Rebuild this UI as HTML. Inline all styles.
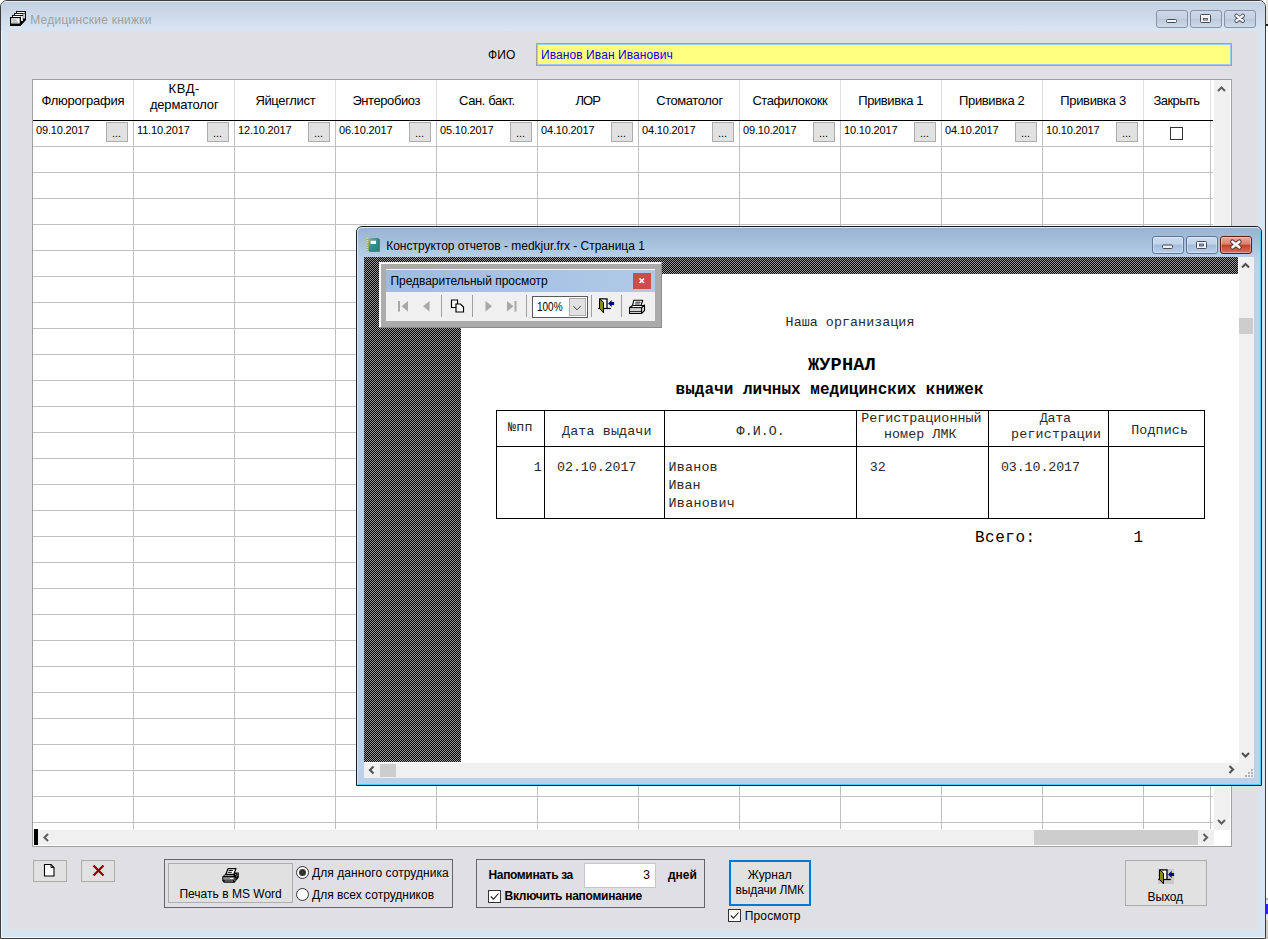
<!DOCTYPE html><html lang="ru"><head><meta charset="utf-8"><title>Медицинские книжки</title><style>
*{box-sizing:border-box;margin:0;padding:0}
html,body{width:1268px;height:939px;overflow:hidden;background:#fff}
body{position:relative;font-family:"Liberation Sans",sans-serif;font-size:12px;color:#000}
.a{position:absolute}
.t{position:absolute;white-space:nowrap;line-height:1}
#bg{left:0;top:0;width:1268px;height:939px;background:#fff}
#main{left:0;top:0;width:1266px;height:939px;border:1px solid #3c3c3c;border-radius:7px 7px 0 0;background:#d7e4f2;overflow:hidden;box-shadow:inset 1px 0 0 #f1f6fb,inset 0 -1px 0 #f1f6fb}
#mtitle{left:0;top:0;width:1264px;height:30px;background:linear-gradient(#e6edf5 0,#e6edf5 1px,#c1cfdf 1px,#ccdae9 45%,#d9e5f3)}
#client{left:8px;top:31px;width:1250px;height:899px;background:#e0dfe3}
.cb{position:absolute;top:10px;height:18px;width:32px;border:1px solid #8693a8;border-radius:3px;background:linear-gradient(#cdd9e8,#c3d0e1 50%,#b9c8db 50%,#cfdbea)}
.hd{position:absolute;text-align:center;font-size:13px;line-height:15px;white-space:nowrap}
.vl{position:absolute;width:1px;background:#c0c0c0}
.hl{position:absolute;height:1px;background:#c0c0c0}
.dt{position:absolute;font-size:11px;line-height:1;white-space:nowrap}
.eb{position:absolute;width:22px;height:20px;background:#e1e1e1;border:1px solid #adadad;font-size:11px;text-align:center;line-height:20px}
.btn{position:absolute;background:#e1e1e1;border:1px solid #adadad}
.grp{position:absolute;border:1px solid #646464}
.m{font-family:"Liberation Mono",monospace;font-size:13.33px;color:#222}
.mm{font-family:"Liberation Mono",monospace}
.chk{background:conic-gradient(#969696 25%,#000 0 50%,#969696 0 75%,#000 0) 0 0/2px 2px}
.sep{position:absolute;width:1px;top:295px;height:22px;background:#a0a0a0}
</style></head><body>
<div id="bg" class="a"></div>
<div class="a" style="left:1266px;top:0;width:2px;height:24px;background:#e8e4dc"></div>
<div class="a" style="left:1266px;top:24px;width:2px;height:2px;background:#222"></div>
<div class="a" style="left:1266px;top:898px;width:2px;height:2px;background:#b0b0b0"></div>
<div class="a" style="left:1266px;top:900px;width:2px;height:4px;background:#e8e8e8"></div>
<div class="a" style="left:1266px;top:904px;width:2px;height:10px;background:#2424ff"></div>
<div class="a" style="left:1266px;top:914px;width:2px;height:6px;background:#e2e2ea"></div>
<div class="a" style="left:1266px;top:920px;width:2px;height:19px;background:#d2cbc3"></div>
<div id="main" class="a">
<div id="mtitle" class="a"></div>
</div>
<svg class="a" style="left:10px;top:11px" width="16" height="15" viewBox="0 0 16 15"><path d="M0 15v-9h2v-2h2v-2h2v-2h10v9l-5.500 6z" fill="#000"/><g fill="#fff"><rect x="1.200" y="7.200" width="8.500" height="5.300"/><rect x="3" y="4.900" width="7.700" height="1.100"/><rect x="5" y="2.900" width="7.700" height="1.100"/><rect x="7" y="0.900" width="7.700" height="1.100"/><rect x="11" y="5" width="1.800" height="5"/><rect x="13.300" y="2.500" width="1.500" height="5"/></g><g fill="#8a8a8a"><rect x="2.200" y="8.600" width="4.500" height="1"/><rect x="2.200" y="10.600" width="6" height="1"/></g></svg>
<div class="t" style="left:30.20px;top:14px;font-size:12px;letter-spacing:0.255px;color:#a0a0a0;">Медицинские книжки</div>
<div class="cb" style="left:1156px"></div>
<div class="cb" style="left:1190px"></div>
<div class="cb" style="left:1224px"></div>
<svg class="a" style="left:1156px;top:10px" width="100" height="18" viewBox="0 0 100 18"><rect x="10.5" y="9.5" width="10" height="3" fill="#f4f4f4" stroke="#434b5c" rx="1"/><rect x="44.500" y="4.500" width="10" height="8" fill="#f4f4f4" stroke="#434b5c" rx="1"/><rect x="47.5" y="8.5" width="4" height="1.6" fill="#c9d5e4" stroke="#434b5c" stroke-width="0.8"/><g stroke-linecap="round" fill="none"><path d="M80.500 5.800l6.300 5M86.800 5.800l-6.300 5" stroke="#434b5c" stroke-width="4.200"/><path d="M80.500 5.800l6.300 5M86.800 5.800l-6.300 5" stroke="#f6f6f6" stroke-width="2.400"/></g></svg>
<div id="client" class="a"></div>
<div class="t" style="left:488.00px;top:49px;font-size:12px;letter-spacing:0.126px;">ФИО</div>
<div class="a" style="left:536px;top:43px;width:696px;height:23px;border:1px solid #a2a2a6;background:#ffff80;box-shadow:inset 0 0 0 1px #a9c7ee"></div>
<div class="t" style="left:541.00px;top:49px;font-size:12px;letter-spacing:0.081px;color:#0000ff;">Иванов Иван Иванович</div>
<div class="a" style="left:32px;top:79px;width:1200px;height:768px;border:1px solid #a0a0a0;background:#fff"></div>
<div class="t" style="left:41.50px;top:94px;font-size:13px;letter-spacing:-0.231px;">Флюрография</div>
<div class="t" style="left:168.60px;top:82px;font-size:13px;letter-spacing:0.546px;">КВД-</div>
<div class="t" style="left:149.90px;top:98px;font-size:13px;letter-spacing:-0.182px;">дерматолог</div>
<div class="t" style="left:255.40px;top:94px;font-size:13px;letter-spacing:-0.335px;">Яйцеглист</div>
<div class="t" style="left:352.40px;top:94px;font-size:13px;letter-spacing:-0.412px;">Энтеробиоз</div>
<div class="t" style="left:459.10px;top:94px;font-size:13px;letter-spacing:-0.388px;">Сан. бакт.</div>
<div class="t" style="left:575.50px;top:94px;font-size:13px;letter-spacing:-0.922px;">ЛОР</div>
<div class="t" style="left:656.20px;top:94px;font-size:13px;letter-spacing:-0.425px;">Стоматолог</div>
<div class="t" style="left:752.40px;top:94px;font-size:13px;letter-spacing:-0.440px;">Стафилококк</div>
<div class="t" style="left:858.30px;top:94px;font-size:13px;letter-spacing:-0.425px;">Прививка 1</div>
<div class="t" style="left:959.00px;top:94px;font-size:13px;letter-spacing:-0.347px;">Прививка 2</div>
<div class="t" style="left:1060.30px;top:94px;font-size:13px;letter-spacing:-0.347px;">Прививка 3</div>
<div class="t" style="left:1153.60px;top:94px;font-size:13px;letter-spacing:-0.616px;">Закрыть</div>
<div class="vl" style="left:133px;top:80px;height:40px;background:#dedede"></div>
<div class="vl" style="left:133px;top:121px;height:708px"></div>
<div class="vl" style="left:234px;top:80px;height:40px;background:#dedede"></div>
<div class="vl" style="left:234px;top:121px;height:708px"></div>
<div class="vl" style="left:335px;top:80px;height:40px;background:#dedede"></div>
<div class="vl" style="left:335px;top:121px;height:708px"></div>
<div class="vl" style="left:436px;top:80px;height:40px;background:#dedede"></div>
<div class="vl" style="left:436px;top:121px;height:708px"></div>
<div class="vl" style="left:537px;top:80px;height:40px;background:#dedede"></div>
<div class="vl" style="left:537px;top:121px;height:708px"></div>
<div class="vl" style="left:638px;top:80px;height:40px;background:#dedede"></div>
<div class="vl" style="left:638px;top:121px;height:708px"></div>
<div class="vl" style="left:739px;top:80px;height:40px;background:#dedede"></div>
<div class="vl" style="left:739px;top:121px;height:708px"></div>
<div class="vl" style="left:840px;top:80px;height:40px;background:#dedede"></div>
<div class="vl" style="left:840px;top:121px;height:708px"></div>
<div class="vl" style="left:941px;top:80px;height:40px;background:#dedede"></div>
<div class="vl" style="left:941px;top:121px;height:708px"></div>
<div class="vl" style="left:1042px;top:80px;height:40px;background:#dedede"></div>
<div class="vl" style="left:1042px;top:121px;height:708px"></div>
<div class="vl" style="left:1143px;top:80px;height:40px;background:#dedede"></div>
<div class="vl" style="left:1143px;top:121px;height:708px"></div>
<div class="vl" style="left:1210px;top:80px;height:40px;background:#dedede"></div>
<div class="vl" style="left:1210px;top:121px;height:708px"></div>
<div class="a" style="left:33px;top:120px;width:1180px;height:1px;background:#000"></div>
<div class="hl" style="left:33px;top:146px;width:1180px"></div>
<div class="hl" style="left:33px;top:172px;width:1180px"></div>
<div class="hl" style="left:33px;top:198px;width:1180px"></div>
<div class="hl" style="left:33px;top:224px;width:1180px"></div>
<div class="hl" style="left:33px;top:250px;width:1180px"></div>
<div class="hl" style="left:33px;top:276px;width:1180px"></div>
<div class="hl" style="left:33px;top:302px;width:1180px"></div>
<div class="hl" style="left:33px;top:328px;width:1180px"></div>
<div class="hl" style="left:33px;top:354px;width:1180px"></div>
<div class="hl" style="left:33px;top:380px;width:1180px"></div>
<div class="hl" style="left:33px;top:406px;width:1180px"></div>
<div class="hl" style="left:33px;top:432px;width:1180px"></div>
<div class="hl" style="left:33px;top:458px;width:1180px"></div>
<div class="hl" style="left:33px;top:484px;width:1180px"></div>
<div class="hl" style="left:33px;top:510px;width:1180px"></div>
<div class="hl" style="left:33px;top:536px;width:1180px"></div>
<div class="hl" style="left:33px;top:562px;width:1180px"></div>
<div class="hl" style="left:33px;top:588px;width:1180px"></div>
<div class="hl" style="left:33px;top:614px;width:1180px"></div>
<div class="hl" style="left:33px;top:640px;width:1180px"></div>
<div class="hl" style="left:33px;top:666px;width:1180px"></div>
<div class="hl" style="left:33px;top:692px;width:1180px"></div>
<div class="hl" style="left:33px;top:718px;width:1180px"></div>
<div class="hl" style="left:33px;top:744px;width:1180px"></div>
<div class="hl" style="left:33px;top:770px;width:1180px"></div>
<div class="hl" style="left:33px;top:796px;width:1180px"></div>
<div class="hl" style="left:33px;top:822px;width:1180px"></div>
<div class="dt" style="left:36px;top:125px;letter-spacing:-0.16px">09.10.2017</div>
<div class="eb" style="left:106px;top:122px"></div>
<div class="t" style="left:112.00px;top:128px;font-size:11px;">...</div>
<div class="dt" style="left:137px;top:125px;letter-spacing:-0.16px">11.10.2017</div>
<div class="eb" style="left:207px;top:122px"></div>
<div class="t" style="left:213.00px;top:128px;font-size:11px;">...</div>
<div class="dt" style="left:238px;top:125px;letter-spacing:-0.16px">12.10.2017</div>
<div class="eb" style="left:308px;top:122px"></div>
<div class="t" style="left:314.00px;top:128px;font-size:11px;">...</div>
<div class="dt" style="left:339px;top:125px;letter-spacing:-0.16px">06.10.2017</div>
<div class="eb" style="left:409px;top:122px"></div>
<div class="t" style="left:415.00px;top:128px;font-size:11px;">...</div>
<div class="dt" style="left:440px;top:125px;letter-spacing:-0.16px">05.10.2017</div>
<div class="eb" style="left:510px;top:122px"></div>
<div class="t" style="left:516.00px;top:128px;font-size:11px;">...</div>
<div class="dt" style="left:541px;top:125px;letter-spacing:-0.16px">04.10.2017</div>
<div class="eb" style="left:611px;top:122px"></div>
<div class="t" style="left:617.00px;top:128px;font-size:11px;">...</div>
<div class="dt" style="left:642px;top:125px;letter-spacing:-0.16px">04.10.2017</div>
<div class="eb" style="left:712px;top:122px"></div>
<div class="t" style="left:718.00px;top:128px;font-size:11px;">...</div>
<div class="dt" style="left:743px;top:125px;letter-spacing:-0.16px">09.10.2017</div>
<div class="eb" style="left:813px;top:122px"></div>
<div class="t" style="left:819.00px;top:128px;font-size:11px;">...</div>
<div class="dt" style="left:844px;top:125px;letter-spacing:-0.16px">10.10.2017</div>
<div class="eb" style="left:914px;top:122px"></div>
<div class="t" style="left:920.00px;top:128px;font-size:11px;">...</div>
<div class="dt" style="left:945px;top:125px;letter-spacing:-0.16px">04.10.2017</div>
<div class="eb" style="left:1015px;top:122px"></div>
<div class="t" style="left:1021.00px;top:128px;font-size:11px;">...</div>
<div class="dt" style="left:1046px;top:125px;letter-spacing:-0.16px">10.10.2017</div>
<div class="eb" style="left:1116px;top:122px"></div>
<div class="t" style="left:1122.00px;top:128px;font-size:11px;">...</div>
<div class="a" style="left:1170px;top:127px;width:13px;height:13px;border:1px solid #333;background:#fff"></div>
<div class="a" style="left:1214px;top:80px;width:16px;height:750px;background:#f0f0f0"></div>
<div class="a" style="left:33px;top:830px;width:1181px;height:15px;background:#f0f0f0"></div>
<div class="a" style="left:34px;top:829px;width:4px;height:16px;background:#000"></div>
<div class="a" style="left:1034px;top:830px;width:164px;height:15px;background:#cdcdcd"></div>
<svg class="a" style="left:0;top:0;pointer-events:none" width="1268" height="939" viewBox="0 0 1268 939"><path d="M1218.0 91L1221.5 87.5L1225.0 91" fill="none" stroke="#606060" stroke-width="2.100"/><path d="M1218.0 820L1221.5 823.5L1225.0 820" fill="none" stroke="#606060" stroke-width="2.100"/><path d="M48 834.0L44.5 837.5L48 841.0" fill="none" stroke="#606060" stroke-width="2.100"/><path d="M1203.5 834.0L1207.0 837.5L1203.5 841.0" fill="none" stroke="#606060" stroke-width="2.100"/></svg>
<div class="btn" style="left:33px;top:860px;width:34px;height:22px"></div>
<svg class="a" style="left:43px;top:863px" width="14" height="15" viewBox="0 0 14 15"><path d="M1.500 1.500h6.500l3 3v8.500h-9.500z" fill="#fff" stroke="#000" stroke-width="1.100"/><path d="M8 1.500v3h3" fill="none" stroke="#000" stroke-width="0.900"/></svg>
<div class="btn" style="left:81px;top:860px;width:34px;height:22px"></div>
<svg class="a" style="left:92px;top:864px" width="13" height="13" viewBox="0 0 13 13"><path d="M1.5 1.500l10 10M11.500 1.500l-10 10" stroke="#8b0000" stroke-width="2.200" fill="none"/></svg>
<div class="grp" style="left:164px;top:859px;width:289px;height:49px"></div>
<div class="btn" style="left:168px;top:863px;width:125px;height:40px"></div>
<div class="t" style="left:179.40px;top:888px;font-size:12px;letter-spacing:0.016px;">Печать в MS Word</div>
<svg class="a" style="left:222px;top:868px" width="17" height="15" viewBox="0 0 17 15"><path d="M0.300 8.500l3-2.500h8.700l1-1.500h3.800v5l-4.300 5.300h-10.500l-1.700-1.800z" fill="#000"/><path d="M6 0.600h8l-2.200 5.700h-8z" fill="#fff" stroke="#000" stroke-width="1.200" stroke-linejoin="round"/><path d="M6.500 2.400h4.300M5.700 4.300h4.100" stroke="#000" stroke-width="1"/><path d="M2.500 7.600h9M2.500 13h8.500" stroke="#e4e4e4" stroke-width="0.700"/><rect x="1.300" y="9.200" width="11.200" height="2.600" fill="#909090"/><rect x="8" y="10" width="3.200" height="1" fill="#fff"/><g fill="#c8c8c8"><rect x="13.200" y="6" width="0.900" height="0.900"/><rect x="14.600" y="7" width="0.900" height="0.900"/><rect x="13.800" y="8.300" width="0.900" height="0.900"/><rect x="14.800" y="5.500" width="0.900" height="0.900"/><rect x="13.300" y="10.500" width="0.900" height="0.900"/><rect x="12.500" y="12" width="0.900" height="0.900"/></g></svg>
<div class="a" style="left:296.0px;top:866.0px;width:13px;height:13px;border:1px solid #333;border-radius:50%;background:#fff"></div><div class="a" style="left:299.0px;top:869.0px;width:7px;height:7px;border-radius:50%;background:#333"></div>
<div class="a" style="left:296.0px;top:888.0px;width:13px;height:13px;border:1px solid #333;border-radius:50%;background:#fff"></div>
<div class="t" style="left:312.10px;top:867px;font-size:12px;letter-spacing:0.061px;">Для данного сотрудника</div>
<div class="t" style="left:312.10px;top:889px;font-size:12px;letter-spacing:0.004px;">Для всех сотрудников</div>
<div class="grp" style="left:476px;top:859px;width:229px;height:49px"></div>
<div class="t" style="left:488.50px;top:869px;font-size:12px;letter-spacing:-0.353px;font-weight:bold;">Напоминать за</div>
<div class="a" style="left:584px;top:863px;width:72px;height:25px;background:#fff;border:1px solid #c5c5cc"></div>
<div class="t" style="left:643.20px;top:869px;font-size:12px;">3</div>
<div class="t" style="left:667.90px;top:869px;font-size:12px;letter-spacing:0.054px;font-weight:bold;">дней</div>
<div class="a" style="left:488px;top:890px;width:13px;height:13px;border:1px solid #333;background:#fff"></div><svg class="a" style="left:488px;top:890px" width="13" height="13" viewBox="0 0 13 13"><path d="M2.800 6.500l2.700 2.700l5-5.700" fill="none" stroke="#222" stroke-width="1.100"/></svg>
<div class="t" style="left:504.60px;top:890px;font-size:12px;letter-spacing:-0.279px;font-weight:bold;">Включить напоминание</div>
<div class="a" style="left:729px;top:860px;width:82px;height:46px;background:#e1e1e1;border:2px solid #0078d7"></div>
<div class="t" style="left:747.70px;top:869px;font-size:12px;letter-spacing:0.043px;">Журнал</div>
<div class="t" style="left:735.60px;top:884px;font-size:12px;letter-spacing:-0.119px;">выдачи ЛМК</div>
<div class="a" style="left:728px;top:909px;width:13px;height:13px;border:1px solid #333;background:#fff"></div><svg class="a" style="left:728px;top:909px" width="13" height="13" viewBox="0 0 13 13"><path d="M2.800 6.500l2.700 2.700l5-5.700" fill="none" stroke="#222" stroke-width="1.100"/></svg>
<div class="t" style="left:744.80px;top:910px;font-size:12px;letter-spacing:0.124px;">Просмотр</div>
<div class="btn" style="left:1125px;top:860px;width:82px;height:46px"></div>
<div class="a" style="left:1158px;top:869px;width:16px;height:15px;background:#c8c8c8"></div>
<svg class="a" style="left:1158px;top:869px" width="17" height="16" viewBox="0 0 17 16"><rect x="5" y="1" width="3.500" height="9.500" fill="#fff"/><path d="M1.500 0.800h7.500v9.700" fill="none" stroke="#000" stroke-width="1.300"/><path d="M0.300 10.500h12.500" stroke="#000" stroke-width="1.200"/><path d="M1.500 0.800l4 3.500v10.500l-4-4.300z" fill="#8c8c14" stroke="#000" stroke-width="1" stroke-linejoin="round"/><path d="M10.100 5.500l3.600-3.500v2h2.400v3h-2.400v2z" fill="#00008b"/></svg>
<div class="t" style="left:1147.50px;top:891px;font-size:12px;letter-spacing:-0.101px;">Выход</div>
<div class="a" style="left:356px;top:226px;width:906px;height:560px;border:1px solid #1c1c1c;border-radius:6px 6px 0 0;background:#b9d1ea;overflow:hidden"><div class="a" style="left:0;top:0;width:904px;height:31px;background:linear-gradient(#98b3d0,#a9c3df 60%,#b9d1ea)"></div><div class="a" style="left:0;top:0;width:904px;height:558px;border:1px solid #d6e7f9;border-radius:5px 5px 0 0;border-bottom-color:#45d0f2;border-right-color:#45d0f2"></div></div>
<svg class="a" style="left:366px;top:237px" width="15" height="16" viewBox="0 0 15 16"><defs><linearGradient id="bk" x1="0" y1="0" x2="1" y2="1"><stop offset="0" stop-color="#8db6b3"/><stop offset="0.450" stop-color="#3a8f8b"/><stop offset="1" stop-color="#148c80"/></linearGradient></defs><rect x="3.300" y="2" width="10.500" height="12.800" fill="#476b6b"/><rect x="2.300" y="1" width="10.300" height="12.900" fill="url(#bk)"/><rect x="0.850" y="1" width="1.500" height="12.700" fill="#9a9a00"/><path d="M1.600 1v12.700" stroke="#f4f400" stroke-width="1.500" stroke-dasharray="1.100 0.700"/><rect x="4.100" y="3.200" width="6" height="3.800" fill="#8fa5a5"/><rect x="4.800" y="3.900" width="5.200" height="3" fill="#fff"/></svg>
<div class="t" style="left:386.20px;top:240px;font-size:12px;letter-spacing:-0.007px;">Конструктор отчетов - medkjur.frx - Страница 1</div>
<div class="a" style="left:1152px;top:236px;width:32px;height:18px;border:1px solid;border-radius:3px;background:linear-gradient(#cddcf0,#bfd2ea 45%,#a3bcdc 50%,#b9cfe8);border-color:#5d7596;box-shadow:inset 0 0 0 1px rgba(255,255,255,.35)"></div>
<div class="a" style="left:1186px;top:236px;width:32px;height:18px;border:1px solid;border-radius:3px;background:linear-gradient(#cddcf0,#bfd2ea 45%,#a3bcdc 50%,#b9cfe8);border-color:#5d7596;box-shadow:inset 0 0 0 1px rgba(255,255,255,.35)"></div>
<div class="a" style="left:1220px;top:236px;width:32px;height:18px;border:1px solid;border-radius:3px;background:linear-gradient(#e9a99b,#d8806d 45%,#c4402a 50%,#d4705a);border-color:#5a1c17;box-shadow:inset 0 0 0 1px rgba(255,255,255,.35)"></div>
<svg class="a" style="left:1153px;top:236px" width="100" height="18" viewBox="0 0 100 18"><rect x="9.500" y="9" width="10" height="3.500" fill="#f0efe9" stroke="#434b5c" rx="1"/><rect x="43.500" y="5.5" width="10" height="7" fill="#f4f4f4" stroke="#434b5c" rx="1"/><rect x="46.500" y="8" width="4" height="2" fill="#8aa6cc" stroke="#434b5c" stroke-width="0.800"/><g stroke-linecap="round" fill="none"><path d="M79.500 5.800l6.800 5.500M86.300 5.800l-6.800 5.500" stroke="#5a3535" stroke-width="4.600"/><path d="M79.500 5.800l6.800 5.500M86.300 5.800l-6.800 5.500" stroke="#f6f6f6" stroke-width="2.700"/></g></svg>
<div class="a" style="left:364px;top:257px;width:890px;height:521px;background:#fff"></div>
<div class="a chk" style="left:364px;top:257px;width:874px;height:505px"></div>
<div class="a" style="left:461px;top:274px;width:778px;height:489px;background:#fff"></div>
<div class="a" style="left:1239px;top:257px;width:15px;height:521px;background:#f0f0f0"></div>
<div class="a" style="left:364px;top:763px;width:890px;height:15px;background:#f0f0f0"></div>
<div class="a" style="left:1239px;top:318px;width:14px;height:16px;background:#cdcdcd"></div>
<div class="a" style="left:380px;top:764px;width:16px;height:13px;background:#cdcdcd"></div>
<svg class="a" style="left:0;top:0" width="1268" height="939" viewBox="0 0 1268 939"><path d="M1242.0 267.5L1245.5 264.0L1249.0 267.5" fill="none" stroke="#505050" stroke-width="2.100"/><path d="M1242.0 753L1245.5 756.5L1249.0 753" fill="none" stroke="#505050" stroke-width="2.100"/><path d="M373.5 766.5L370.0 770L373.5 773.5" fill="none" stroke="#505050" stroke-width="2.100"/><path d="M1229.5 766.0L1233.0 769.5L1229.5 773.0" fill="none" stroke="#505050" stroke-width="2.100"/><g fill="#b4b4b4"><rect x="1251" y="769" width="2" height="2"/><rect x="1248" y="772" width="2" height="2"/><rect x="1251" y="772" width="2" height="2"/><rect x="1245" y="775" width="2" height="2"/><rect x="1248" y="775" width="2" height="2"/><rect x="1251" y="775" width="2" height="2"/></g></svg>
<div class="t mm" style="left:785.60px;top:316px;font-size:13.33px;letter-spacing:0.055px;color:#2a2a2a;">Наша организация</div>
<div class="t mm" style="left:808.00px;top:356px;font-size:18.67px;letter-spacing:0.104px;font-weight:bold;">ЖУРНАЛ</div>
<div class="t mm" style="left:675.60px;top:382px;font-size:16px;letter-spacing:0.024px;font-weight:bold;">выдачи личных медицинских книжек</div>
<div class="a" style="left:496px;top:410px;width:709px;height:109px;border:1px solid #000"></div>
<div class="a" style="left:496px;top:446px;width:709px;height:1px;background:#000"></div>
<div class="a" style="left:544px;top:410px;width:1px;height:109px;background:#000"></div>
<div class="a" style="left:664px;top:410px;width:1px;height:109px;background:#000"></div>
<div class="a" style="left:856px;top:410px;width:1px;height:109px;background:#000"></div>
<div class="a" style="left:988px;top:410px;width:1px;height:109px;background:#000"></div>
<div class="a" style="left:1108px;top:410px;width:1px;height:109px;background:#000"></div>
<div class="t mm" style="left:508.10px;top:421px;font-size:13.33px;letter-spacing:0.152px;color:#2a2a2a;">№пп</div>
<div class="t mm" style="left:562.10px;top:425px;font-size:13.33px;letter-spacing:0.142px;color:#2a2a2a;">Дата выдачи</div>
<div class="t mm" style="left:736.60px;top:425px;font-size:13.33px;letter-spacing:0.042px;color:#2a2a2a;">Ф.И.О.</div>
<div class="t mm" style="left:861.30px;top:412px;font-size:13.33px;letter-spacing:0.009px;color:#2a2a2a;">Регистрационный</div>
<div class="t mm" style="left:884.00px;top:428px;font-size:13.33px;letter-spacing:0.064px;color:#2a2a2a;">номер ЛМК</div>
<div class="t mm" style="left:1039.70px;top:412px;font-size:13.33px;letter-spacing:-0.265px;color:#2a2a2a;">Дата</div>
<div class="t mm" style="left:1011.00px;top:428px;font-size:13.33px;letter-spacing:0.202px;color:#2a2a2a;">регистрации</div>
<div class="t mm" style="left:1131.20px;top:424px;font-size:13.33px;letter-spacing:0.135px;color:#2a2a2a;">Подпись</div>
<div class="t mm" style="left:533.80px;top:461px;font-size:13.33px;color:#2a2a2a;">1</div>
<div class="t mm" style="left:557.10px;top:461px;font-size:13.33px;letter-spacing:-0.087px;color:#2a2a2a;">02.10.2017</div>
<div class="t mm" style="left:668.50px;top:461px;font-size:13.33px;letter-spacing:0.222px;color:#2a2a2a;">Иванов</div>
<div class="t mm" style="left:668.50px;top:479px;font-size:13.33px;color:#2a2a2a;">Иван</div>
<div class="t mm" style="left:668.50px;top:497px;font-size:13.33px;letter-spacing:0.316px;color:#2a2a2a;">Иванович</div>
<div class="t mm" style="left:869.80px;top:461px;font-size:13.33px;color:#2a2a2a;">32</div>
<div class="t mm" style="left:1000.90px;top:461px;font-size:13.33px;letter-spacing:-0.098px;color:#2a2a2a;">03.10.2017</div>
<div class="t mm" style="left:975.00px;top:530px;font-size:16px;letter-spacing:0.498px;color:#000;">Всего:</div>
<div class="t mm" style="left:1133.50px;top:530px;font-size:16px;color:#000;">1</div>
<div class="a" style="left:379px;top:262px;width:283px;height:66px;background:#ababab;border:1px solid;border-color:#f4f4f4 #8c8c8c #8c8c8c #f4f4f4;box-shadow:inset 1px 1px 0 #fcfcfc"></div>
<div class="a" style="left:386px;top:269px;width:269px;height:52px;background:#f0f0f0;border-top:1px solid #f6f6f6"></div>
<div class="a" style="left:386px;top:270px;width:269px;height:22px;background:linear-gradient(90deg,#9fbbe0,#b0c9e8)"></div>
<div class="t" style="left:390.40px;top:275px;font-size:12px;letter-spacing:-0.025px;">Предварительный просмотр</div>
<div class="a" style="left:633px;top:273px;width:18px;height:16px;background:#d04a4d"></div>
<svg class="a" style="left:633px;top:273px" width="18" height="16" viewBox="0 0 18 16"><path d="M6.500 5.500l4.500 4.500M11 5.500l-4.500 4.500" stroke="#fff" stroke-width="1.700"/></svg>
<div class="sep" style="left:441px"></div>
<div class="sep" style="left:472px"></div>
<div class="sep" style="left:526px"></div>
<div class="sep" style="left:591px"></div>
<div class="sep" style="left:621px"></div>
<svg class="a" style="left:386px;top:292px" width="269" height="29" viewBox="386 292 269 29"><g fill="#a8a8a8"><rect x="398" y="301" width="2" height="10.500"/><path d="M408 301v10.500l-6.500-5.250z"/><path d="M429.500 301v10.500l-6.500-5.250z"/><path d="M485.500 301v10.500l6.500-5.250z"/><path d="M507 301v10.500l6.500-5.250z"/><rect x="514.500" y="301" width="2" height="10.500"/></g><g fill="#fff" stroke="#000" stroke-width="1.200"><path d="M451.500 300h6v7.500h-6z"/><path d="M456 304h4.500l3 3v5h-7.500z"/></g></svg>
<div class="a" style="left:532px;top:296px;width:56px;height:22px;background:#fff;border:1px solid #5a5a5a"></div>
<div class="t" style="left:536.80px;top:301px;font-size:12.5px;transform-origin:0 0;transform:scaleX(0.7973);">100%</div>
<div class="a" style="left:569px;top:298px;width:17px;height:18px;background:#e1e1e1;border:1px solid #adadad"></div>
<svg class="a" style="left:569px;top:298px" width="17" height="18" viewBox="0 0 17 18"><path d="M4.200 8l3.800 3.800 3.800-3.800" fill="none" stroke="#444" stroke-width="1"/></svg>
<svg class="a" style="left:598px;top:298px" width="17" height="16" viewBox="0 0 17 16"><rect x="5" y="1" width="3.500" height="9.500" fill="#fff"/><path d="M1.500 0.800h7.500v9.700" fill="none" stroke="#000" stroke-width="1.300"/><path d="M0.300 10.500h12.500" stroke="#000" stroke-width="1.200"/><path d="M1.500 0.800l4 3.500v10.500l-4-4.300z" fill="#8c8c14" stroke="#000" stroke-width="1" stroke-linejoin="round"/><path d="M10.100 5.500l3.600-3.500v2h2.400v3h-2.400v2z" fill="#00008b"/></svg>
<svg class="a" style="left:628px;top:299px" width="18" height="15" viewBox="0 0 18 15"><g stroke="#000" stroke-width="1.100" stroke-linejoin="round"><path d="M5.800 1.200h9l-2 5.600h-8.300z" fill="#fff"/><path d="M7.500 3.200h5M6.800 5h5" stroke-width="0.900"/><path d="M1.500 8.800l3-2.300h11.500l-2.500 2.300z" fill="#fff"/><path d="M13.500 8.800l3-2.800v5.500l-3 3z" fill="#ddd"/><rect x="1.500" y="8.800" width="12" height="5.700" fill="#fff"/><path d="M2 11h11" stroke="#b8b8b8" stroke-width="1.300"/><path d="M1.500 12.700h12" stroke-width="1"/></g></svg>
</body></html>
